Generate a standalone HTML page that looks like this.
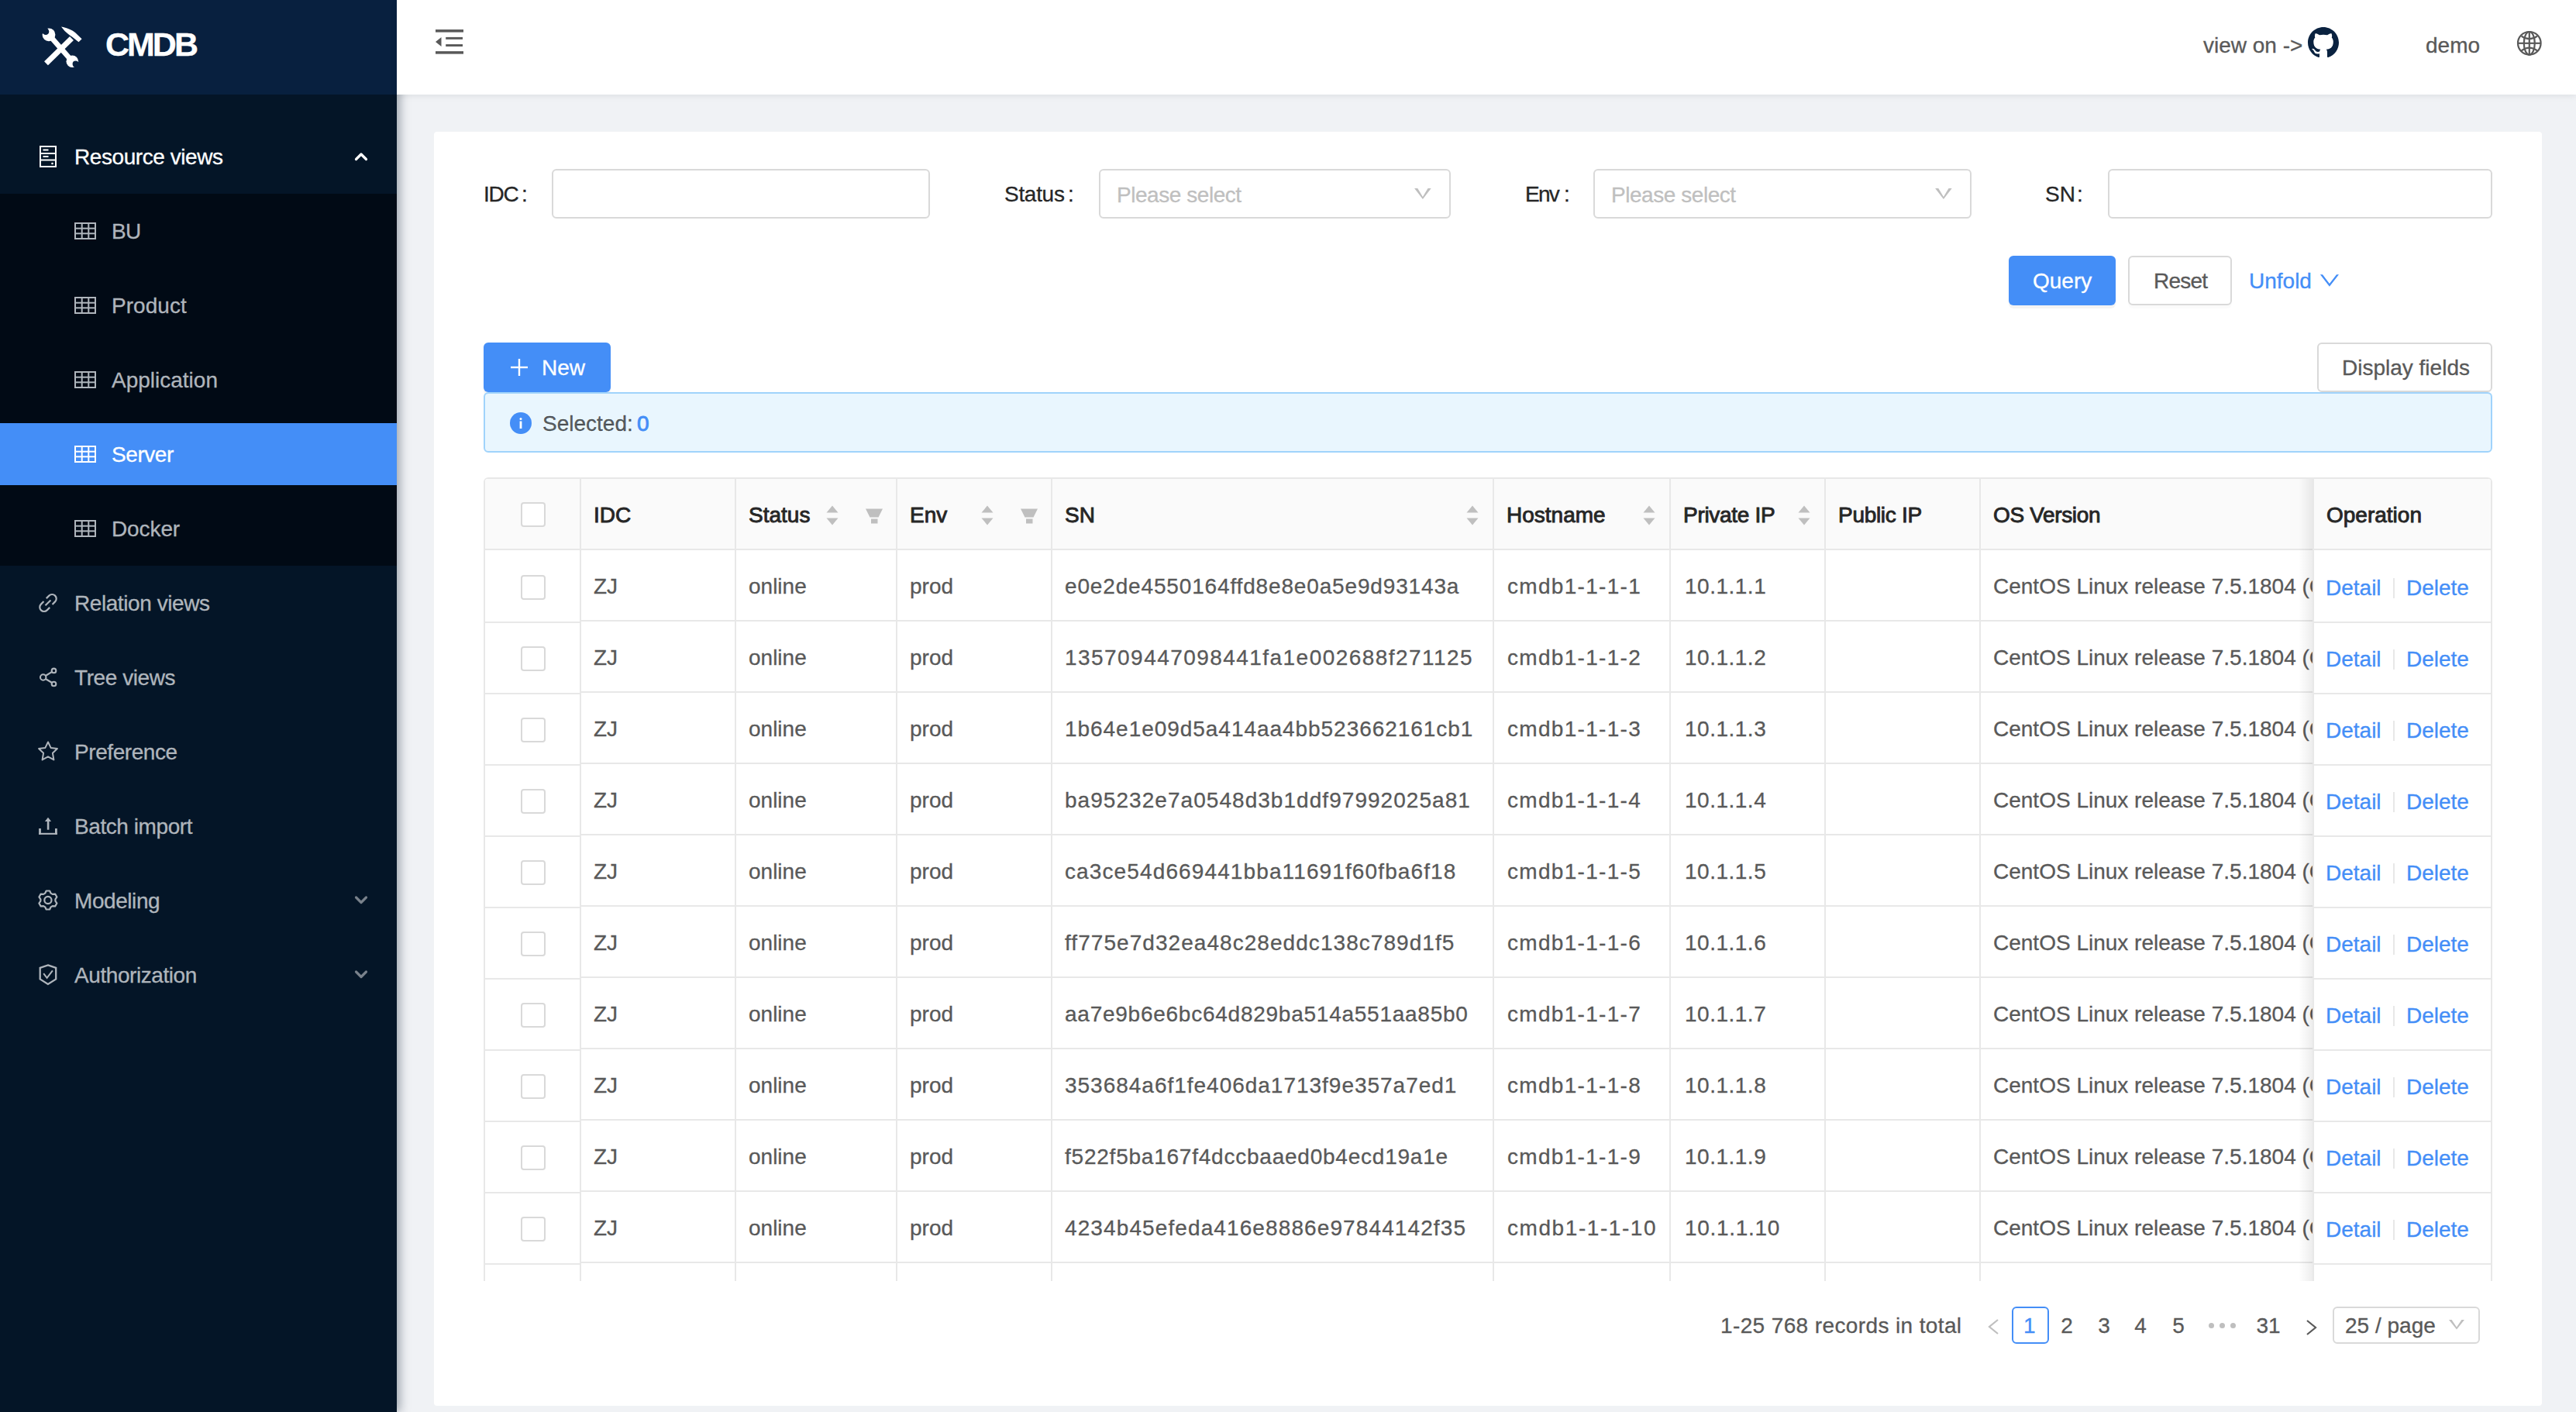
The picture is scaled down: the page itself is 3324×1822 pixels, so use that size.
<!DOCTYPE html>
<html><head><meta charset="utf-8"><title>CMDB - Server</title>
<style>
html,body{margin:0;padding:0;}
body{width:3324px;height:1822px;position:relative;overflow:hidden;background:#f0f2f5;font-family:"Liberation Sans",sans-serif;}
.a{position:absolute;box-sizing:border-box;}
.t{position:absolute;white-space:pre;line-height:1;-webkit-text-stroke-width:0.3px;}
svg.a{overflow:visible;}
</style></head><body>

<div class="a" style="left:512px;top:0px;width:2812px;height:122px;background:#fff;box-shadow:0 2px 8px rgba(0,21,41,0.08);z-index:5"></div>
<div style="position:absolute;left:0;top:0;z-index:6">
<svg class="a" style="left:562px;top:38px;" width="36" height="32" viewBox="0 0 36 32"><g fill="#595959"><rect x="0" y="0.1" width="36" height="3.5"/><rect x="13.2" y="9.9" width="21.8" height="2.9"/><rect x="13.2" y="19.1" width="21.8" height="2.9"/><rect x="0" y="28.1" width="36" height="3.5"/><path d="M0 16 L7.5 10 L7.5 22 Z"/></g></svg>
<div class="t" style="left:2843px;top:45.29px;font-size:28px;color:#595959;font-weight:400;">view on -&gt;</div>
<svg class="a" style="left:2978px;top:35px;" width="40" height="40" viewBox="0 0 16 16"><path fill="#0a2240" d="M8 0C3.58 0 0 3.58 0 8c0 3.54 2.29 6.53 5.47 7.59.4.07.55-.17.55-.38 0-.19-.01-.82-.01-1.49-2.01.37-2.53-.49-2.69-.94-.09-.23-.48-.94-.82-1.13-.28-.15-.68-.52-.01-.53.63-.01 1.08.58 1.23.82.72 1.21 1.87.87 2.33.66.07-.52.28-.87.51-1.07-1.78-.2-3.64-.89-3.64-3.95 0-.87.31-1.59.82-2.15-.08-.2-.36-1.02.08-2.12 0 0 .67-.21 2.2.82.64-.18 1.32-.27 2-.27.68 0 1.36.09 2 .27 1.53-1.04 2.2-.82 2.2-.82.44 1.1.16 1.92.08 2.12.51.56.82 1.27.82 2.15 0 3.07-1.87 3.75-3.65 3.95.29.25.54.73.54 1.48 0 1.07-.01 1.93-.01 2.2 0 .21.15.46.55.38A8.013 8.013 0 0016 8c0-4.42-3.58-8-8-8z"/></svg>
<div class="t" style="left:3130px;top:45.29px;font-size:28px;color:#595959;font-weight:400;">demo</div>
<svg class="a" style="left:3246px;top:38px;" width="36" height="36" viewBox="0 0 36 36"><g fill="none" stroke="#595959" stroke-width="2.2"><circle cx="17.8" cy="17.8" r="14.8"/><ellipse cx="17.8" cy="17.8" rx="7" ry="14.8"/><line x1="17.8" y1="3" x2="17.8" y2="32.6"/><line x1="3" y1="17.8" x2="32.6" y2="17.8"/><path d="M7.6 8.6 Q17.8 15.8 28 8.6 M7.6 27.3 Q17.8 19.9 28 27.3"/></g></svg>
</div>
<div class="a" style="left:0px;top:0px;width:512px;height:1822px;background:#041527;box-shadow:4px 0 12px rgba(0,21,41,0.35);z-index:3"></div>
<div style="position:absolute;left:0;top:0;z-index:4">
<div class="a" style="left:0px;top:0px;width:512px;height:122px;background:#08203f"></div>
<svg class="a" style="left:50px;top:32px;" width="56" height="56" viewBox="0 0 56 56"><defs><mask id="wm"><rect width="56" height="56" fill="#fff"/>
<circle cx="9" cy="8.7" r="4.3" fill="#000"/><g transform="translate(9,8.7) rotate(49)"><rect x="-12" y="-4.3" width="12" height="8.6" fill="#000"/></g>
<circle cx="47.6" cy="50.6" r="4" fill="#000"/><g transform="translate(47.6,50.6) rotate(49)"><rect x="0" y="-4" width="12" height="8" fill="#000"/></g>
</mask></defs>
<g fill="#fff" mask="url(#wm)"><line x1="13" y1="12.8" x2="43.3" y2="47.2" stroke="#fff" stroke-width="6.6"/><circle cx="13" cy="12.8" r="8.4"/><circle cx="43.3" cy="47.2" r="7.8"/></g>
<line x1="9.5" y1="49.7" x2="42.5" y2="17.5" stroke="#fff" stroke-width="7"/>
<path d="M29 2.6 C36 4 43 6.5 47 10 L55.6 18.2 L51.5 22.2 L43 15.5 C40 13.5 37 11 33.5 8 Z" fill="#fff"/></svg>
<div class="t" style="left:136px;top:35.89px;font-size:43px;color:#fff;font-weight:700;letter-spacing:-3px">CMDB</div>
<svg class="a" style="left:51px;top:188px;" width="22" height="28" viewBox="0 0 22 28"><g fill="none" stroke="#fff" stroke-width="2"><rect x="1" y="1" width="20" height="26"/><line x1="1" y1="10" x2="21" y2="10"/><line x1="1" y1="18.5" x2="21" y2="18.5"/></g><g fill="#fff"><rect x="4.5" y="4.5" width="7" height="2"/><rect x="4.5" y="13" width="7" height="2"/><circle cx="16.5" cy="23" r="1.3"/></g></svg>
<div class="t" style="left:96px;top:189.29px;font-size:28px;color:#fff;font-weight:400;letter-spacing:-0.43px">Resource views</div>
<svg class="a" style="left:456px;top:195.5px;" width="20" height="14" viewBox="0 0 20 14"><path d="M3.5 9.5 L10 3 L16.5 9.5" fill="none" stroke="#fff" stroke-width="3.2" stroke-linecap="round" stroke-linejoin="round"/></svg>
<div class="a" style="left:0px;top:250px;width:512px;height:480px;background:#010a15"></div>
<div class="a" style="left:0px;top:546px;width:512px;height:80px;background:#448ef7"></div>
<svg class="a" style="left:96px;top:287px;" width="28" height="22" viewBox="0 0 28 22"><g fill="none" stroke="#afb5bc" stroke-width="2"><rect x="1" y="1" width="26" height="20"/><line x1="1" y1="7.7" x2="27" y2="7.7"/><line x1="1" y1="14.3" x2="27" y2="14.3"/><line x1="9.7" y1="1" x2="9.7" y2="21"/><line x1="18.3" y1="1" x2="18.3" y2="21"/></g></svg>
<div class="t" style="left:144px;top:285.29px;font-size:28px;color:#afb5bc;font-weight:400;letter-spacing:-0.8px">BU</div>
<svg class="a" style="left:96px;top:383px;" width="28" height="22" viewBox="0 0 28 22"><g fill="none" stroke="#afb5bc" stroke-width="2"><rect x="1" y="1" width="26" height="20"/><line x1="1" y1="7.7" x2="27" y2="7.7"/><line x1="1" y1="14.3" x2="27" y2="14.3"/><line x1="9.7" y1="1" x2="9.7" y2="21"/><line x1="18.3" y1="1" x2="18.3" y2="21"/></g></svg>
<div class="t" style="left:144px;top:381.29px;font-size:28px;color:#afb5bc;font-weight:400;letter-spacing:0.05px">Product</div>
<svg class="a" style="left:96px;top:479px;" width="28" height="22" viewBox="0 0 28 22"><g fill="none" stroke="#afb5bc" stroke-width="2"><rect x="1" y="1" width="26" height="20"/><line x1="1" y1="7.7" x2="27" y2="7.7"/><line x1="1" y1="14.3" x2="27" y2="14.3"/><line x1="9.7" y1="1" x2="9.7" y2="21"/><line x1="18.3" y1="1" x2="18.3" y2="21"/></g></svg>
<div class="t" style="left:144px;top:477.29px;font-size:28px;color:#afb5bc;font-weight:400;letter-spacing:0px">Application</div>
<svg class="a" style="left:96px;top:575px;" width="28" height="22" viewBox="0 0 28 22"><g fill="none" stroke="#fff" stroke-width="2"><rect x="1" y="1" width="26" height="20"/><line x1="1" y1="7.7" x2="27" y2="7.7"/><line x1="1" y1="14.3" x2="27" y2="14.3"/><line x1="9.7" y1="1" x2="9.7" y2="21"/><line x1="18.3" y1="1" x2="18.3" y2="21"/></g></svg>
<div class="t" style="left:144px;top:573.29px;font-size:28px;color:#fff;font-weight:400;letter-spacing:-0.43px">Server</div>
<svg class="a" style="left:96px;top:671px;" width="28" height="22" viewBox="0 0 28 22"><g fill="none" stroke="#afb5bc" stroke-width="2"><rect x="1" y="1" width="26" height="20"/><line x1="1" y1="7.7" x2="27" y2="7.7"/><line x1="1" y1="14.3" x2="27" y2="14.3"/><line x1="9.7" y1="1" x2="9.7" y2="21"/><line x1="18.3" y1="1" x2="18.3" y2="21"/></g></svg>
<div class="t" style="left:144px;top:669.29px;font-size:28px;color:#afb5bc;font-weight:400;letter-spacing:-0.1px">Docker</div>
<div class="t" style="left:96px;top:765.29px;font-size:28px;color:#afb5bc;font-weight:400;letter-spacing:-0.43px">Relation views</div>
<div class="t" style="left:96px;top:861.29px;font-size:28px;color:#afb5bc;font-weight:400;letter-spacing:-0.43px">Tree views</div>
<div class="t" style="left:96px;top:957.29px;font-size:28px;color:#afb5bc;font-weight:400;letter-spacing:-0.43px">Preference</div>
<div class="t" style="left:96px;top:1053.29px;font-size:28px;color:#afb5bc;font-weight:400;letter-spacing:-0.43px">Batch import</div>
<div class="t" style="left:96px;top:1149.29px;font-size:28px;color:#afb5bc;font-weight:400;letter-spacing:-0.43px">Modeling</div>
<div class="t" style="left:96px;top:1245.29px;font-size:28px;color:#afb5bc;font-weight:400;letter-spacing:-0.43px">Authorization</div>
<svg class="a" style="left:44px;top:760px;" width="36" height="36" viewBox="0 0 36 36"><g fill="none" stroke="#afb5bc" stroke-width="2.2"><path d="M23.55 19.92 L27.09 16.39 A5.5 5.5 0 0 0 19.31 8.61 L15.77 12.15"/><path d="M12.45 16.08 L8.91 19.61 A5.5 5.5 0 0 0 16.69 27.39 L20.23 23.85"/><line x1="14.5" y1="21.2" x2="21.4" y2="14.5"/></g></svg>
<svg class="a" style="left:44px;top:856px;" width="36" height="36" viewBox="0 0 36 36"><g fill="none" stroke="#afb5bc" stroke-width="2.1"><circle cx="11.7" cy="18" r="3.7"/><circle cx="25.5" cy="9.4" r="2.8"/><circle cx="25.5" cy="26.5" r="2.8"/><line x1="14.8" y1="16" x2="23.1" y2="10.9"/><line x1="14.8" y1="20" x2="23.1" y2="25"/></g></svg>
<svg class="a" style="left:49px;top:956px;" width="26" height="26" viewBox="0 0 26 26"><path fill="none" stroke="#afb5bc" stroke-width="2" stroke-linejoin="round" d="M13 1.5 L16.6 8.9 L24.9 10 L18.9 15.7 L20.4 24.4 L13 20.3 L5.6 24.4 L7.1 15.7 L1.1 10 L9.4 8.9 Z"/></svg>
<svg class="a" style="left:50px;top:1053px;" width="24" height="24" viewBox="0 0 24 24"><g fill="#afb5bc"><rect x="0.1" y="16" width="2.8" height="7.9"/><rect x="21" y="16" width="2.8" height="7.9"/><rect x="0.1" y="21.8" width="23.7" height="2.1"/><path d="M7.9 7 L12 1.7 L16.1 7 Z"/><rect x="10.8" y="6.5" width="2.6" height="11.2"/></g></svg>
<svg class="a" style="left:44px;top:1142px;" width="36" height="36" viewBox="0 0 36 36"><g fill="none" stroke="#afb5bc" stroke-width="2.2" stroke-linejoin="round"><path d="M14.15 10.66 L15.68 7.50 L20.12 7.50 L21.65 10.66 L23.68 11.83 L27.18 11.58 L29.40 15.43 L27.43 18.33 L27.43 20.67 L29.40 23.57 L27.18 27.42 L23.68 27.17 L21.65 28.34 L20.12 31.50 L15.68 31.50 L14.15 28.34 L12.12 27.17 L8.62 27.42 L6.40 23.57 L8.37 20.67 L8.37 18.33 L6.40 15.43 L8.62 11.58 L12.12 11.83 Z"/><circle cx="17.9" cy="19.5" r="4.6"/></g></svg>
<svg class="a" style="left:44px;top:1238px;" width="36" height="36" viewBox="0 0 36 36"><g fill="none" stroke="#afb5bc" stroke-width="2.3"><path d="M17.9 7.4 L28.2 10.8 V25.4 L17.9 32 L7.7 25.4 V10.8 Z"/><path d="M12.2 18.2 L16.6 23.9 L23.9 14.3" stroke-width="2"/></g></svg>
<svg class="a" style="left:456px;top:1155.3px;" width="20" height="14" viewBox="0 0 20 14"><path d="M3.5 3 L10 9.5 L16.5 3" fill="none" stroke="#79818b" stroke-width="3.2" stroke-linecap="round" stroke-linejoin="round"/></svg>
<svg class="a" style="left:456px;top:1251.3px;" width="20" height="14" viewBox="0 0 20 14"><path d="M3.5 3 L10 9.5 L16.5 3" fill="none" stroke="#79818b" stroke-width="3.2" stroke-linecap="round" stroke-linejoin="round"/></svg>
</div>
<div class="a" style="left:560px;top:170px;width:2720px;height:1644px;background:#fff;border-radius:4px"></div>
<div class="t" style="left:624px;top:237.29px;font-size:28px;color:#262626;font-weight:400;letter-spacing:-1.3px">IDC</div>
<div class="t" style="left:673px;top:237.29px;font-size:28px;color:#262626;font-weight:400;">:</div>
<div class="a" style="left:712px;top:218px;width:488px;height:64px;border:2px solid #d9d9d9;border-radius:6px;background:#fff"></div>
<div class="t" style="left:1296px;top:237.29px;font-size:28px;color:#262626;font-weight:400;letter-spacing:-0.3px">Status</div>
<div class="t" style="left:1378px;top:237.29px;font-size:28px;color:#262626;font-weight:400;">:</div>
<div class="a" style="left:1418px;top:218px;width:454px;height:64px;border:2px solid #d9d9d9;border-radius:6px;background:#fff"></div>
<div class="t" style="left:1441px;top:238.29px;font-size:28px;color:#bfbfbf;font-weight:400;letter-spacing:-0.45px">Please select</div>
<svg class="a" style="left:1825px;top:243px;" width="22" height="14" viewBox="0 0 22 14"><path d="M0.1 0 L4.3 0 L10.9 11.1 L17.5 0 L21.7 0 L10.9 14 Z" fill="#bfbfbf"/></svg>
<div class="t" style="left:1968px;top:237.29px;font-size:28px;color:#262626;font-weight:400;letter-spacing:-1.8px">Env</div>
<div class="t" style="left:2018px;top:237.29px;font-size:28px;color:#262626;font-weight:400;">:</div>
<div class="a" style="left:2056px;top:218px;width:488px;height:64px;border:2px solid #d9d9d9;border-radius:6px;background:#fff"></div>
<div class="t" style="left:2079px;top:238.29px;font-size:28px;color:#bfbfbf;font-weight:400;letter-spacing:-0.45px">Please select</div>
<svg class="a" style="left:2497px;top:243px;" width="22" height="14" viewBox="0 0 22 14"><path d="M0.1 0 L4.3 0 L10.9 11.1 L17.5 0 L21.7 0 L10.9 14 Z" fill="#bfbfbf"/></svg>
<div class="t" style="left:2639px;top:237.29px;font-size:28px;color:#262626;font-weight:400;">SN</div>
<div class="t" style="left:2680px;top:237.29px;font-size:28px;color:#262626;font-weight:400;">:</div>
<div class="a" style="left:2720px;top:218px;width:496px;height:64px;border:2px solid #d9d9d9;border-radius:6px;background:#fff"></div>
<div class="a" style="left:2592px;top:330px;width:138px;height:64px;background:#448ef7;border-radius:6px;box-shadow:0 4px 0 rgba(0,0,0,0.045)"></div>
<div class="t" style="left:2623px;top:349.29px;font-size:28px;color:#fff;font-weight:400;">Query</div>
<div class="a" style="left:2746px;top:330px;width:134px;height:64px;border:2px solid #d9d9d9;border-radius:6px;background:#fff;box-shadow:0 4px 0 rgba(0,0,0,0.015)"></div>
<div class="t" style="left:2779px;top:349.29px;font-size:28px;color:#595959;font-weight:400;letter-spacing:-0.8px">Reset</div>
<div class="t" style="left:2902px;top:349.29px;font-size:28px;color:#448ef7;font-weight:400;">Unfold</div>
<svg class="a" style="left:2994px;top:354px;" width="24" height="16" viewBox="0 0 24 16"><path d="M-0.1 0.2 L3 0.2 L11.9 12.1 L21 0.2 L24 0.2 L11.9 15.7 Z" fill="#448ef7"/></svg>
<div class="a" style="left:624px;top:442px;width:164px;height:64px;background:#448ef7;border-radius:6px;box-shadow:0 4px 0 rgba(0,0,0,0.045)"></div>
<svg class="a" style="left:659px;top:463px;" width="22" height="22" viewBox="0 0 22 22"><g stroke="#fff" stroke-width="2.4"><line x1="0" y1="11" x2="22" y2="11"/><line x1="11" y1="0" x2="11" y2="22"/></g></svg>
<div class="t" style="left:699px;top:461.29px;font-size:28px;color:#fff;font-weight:400;">New</div>
<div class="a" style="left:2990px;top:442px;width:226px;height:64px;border:2px solid #d9d9d9;border-radius:6px;background:#fff"></div>
<div class="t" style="left:3022px;top:461.29px;font-size:28px;color:#595959;font-weight:400;">Display fields</div>
<div class="a" style="left:624px;top:506px;width:2592px;height:78px;background:#e9f6fe;border:2px solid #a0d3fb;border-radius:6px"></div>
<svg class="a" style="left:658px;top:532px;" width="28" height="28" viewBox="0 0 28 28"><circle cx="14" cy="14" r="14" fill="#448ef7"/><rect x="12.6" y="11.5" width="2.8" height="9.5" fill="#fff"/><circle cx="14" cy="8.5" r="1.5" fill="#fff"/></svg>
<div class="t" style="left:700px;top:533.29px;font-size:28px;color:rgba(0,0,0,0.65);font-weight:400;">Selected: </div>
<div class="t" style="left:822px;top:533.29px;font-size:28px;color:#448ef7;font-weight:400;-webkit-text-stroke-width:0.9px">0</div>
<div class="a" style="left:624px;top:616px;width:2592px;height:1037px;overflow:hidden;border:2px solid #e8e8e8;border-bottom:none;border-radius:6px 6px 0 0;background:#fff">
<div class="a" style="left:0px;top:0px;width:2588px;height:90px;background:#fafafa"></div>
<div class="a" style="left:0px;top:90px;width:2588px;height:2px;background:#e8e8e8"></div>
<div class="a" style="left:122px;top:0px;width:2px;height:1040px;background:#e8e8e8"></div>
<div class="a" style="left:322px;top:0px;width:2px;height:1040px;background:#e8e8e8"></div>
<div class="a" style="left:530px;top:0px;width:2px;height:1040px;background:#e8e8e8"></div>
<div class="a" style="left:730px;top:0px;width:2px;height:1040px;background:#e8e8e8"></div>
<div class="a" style="left:1300px;top:0px;width:2px;height:1040px;background:#e8e8e8"></div>
<div class="a" style="left:1528px;top:0px;width:2px;height:1040px;background:#e8e8e8"></div>
<div class="a" style="left:1728px;top:0px;width:2px;height:1040px;background:#e8e8e8"></div>
<div class="a" style="left:1928px;top:0px;width:2px;height:1040px;background:#e8e8e8"></div>
<div class="a" style="left:124px;top:182px;width:2240px;height:2px;background:#e8e8e8"></div>
<div class="a" style="left:124px;top:274px;width:2240px;height:2px;background:#e8e8e8"></div>
<div class="a" style="left:124px;top:366px;width:2240px;height:2px;background:#e8e8e8"></div>
<div class="a" style="left:124px;top:458px;width:2240px;height:2px;background:#e8e8e8"></div>
<div class="a" style="left:124px;top:550px;width:2240px;height:2px;background:#e8e8e8"></div>
<div class="a" style="left:124px;top:642px;width:2240px;height:2px;background:#e8e8e8"></div>
<div class="a" style="left:124px;top:734px;width:2240px;height:2px;background:#e8e8e8"></div>
<div class="a" style="left:124px;top:826px;width:2240px;height:2px;background:#e8e8e8"></div>
<div class="a" style="left:124px;top:918px;width:2240px;height:2px;background:#e8e8e8"></div>
<div class="a" style="left:124px;top:1010px;width:2240px;height:2px;background:#e8e8e8"></div>
<div class="t" style="left:140px;top:33.29px;font-size:28px;color:#262626;font-weight:400;-webkit-text-stroke:0.9px #262626;letter-spacing:0px">IDC</div>
<div class="t" style="left:340px;top:33.29px;font-size:28px;color:#262626;font-weight:400;-webkit-text-stroke:0.9px #262626;letter-spacing:0px">Status</div>
<div class="t" style="left:548px;top:33.29px;font-size:28px;color:#262626;font-weight:400;-webkit-text-stroke:0.9px #262626;letter-spacing:0px">Env</div>
<div class="t" style="left:748px;top:33.29px;font-size:28px;color:#262626;font-weight:400;-webkit-text-stroke:0.9px #262626;letter-spacing:0px">SN</div>
<div class="t" style="left:1318px;top:33.29px;font-size:28px;color:#262626;font-weight:400;-webkit-text-stroke:0.9px #262626;letter-spacing:0px">Hostname</div>
<div class="t" style="left:1546px;top:33.29px;font-size:28px;color:#262626;font-weight:400;-webkit-text-stroke:0.9px #262626;letter-spacing:-0.3px">Private IP</div>
<div class="t" style="left:1746px;top:33.29px;font-size:28px;color:#262626;font-weight:400;-webkit-text-stroke:0.9px #262626;letter-spacing:-0.3px">Public IP</div>
<div class="t" style="left:1946px;top:33.29px;font-size:28px;color:#262626;font-weight:400;-webkit-text-stroke:0.9px #262626;letter-spacing:-0.35px">OS Version</div>
<svg class="a" style="left:440px;top:34px;" width="16" height="26" viewBox="0 0 16 26"><g fill="#bfbfbf"><path d="M8 0.5 L15.5 9.5 H0.5 Z"/><path d="M0.5 16.5 H15.5 L8 25.5 Z"/></g></svg>
<svg class="a" style="left:491px;top:38px;" width="22" height="20" viewBox="0 0 22 20"><g fill="#bfbfbf"><path d="M0 0.5 H22 L16.5 11.5 H5.5 Z"/><rect x="7" y="13.5" width="8.5" height="6"/></g></svg>
<svg class="a" style="left:640px;top:34px;" width="16" height="26" viewBox="0 0 16 26"><g fill="#bfbfbf"><path d="M8 0.5 L15.5 9.5 H0.5 Z"/><path d="M0.5 16.5 H15.5 L8 25.5 Z"/></g></svg>
<svg class="a" style="left:691px;top:38px;" width="22" height="20" viewBox="0 0 22 20"><g fill="#bfbfbf"><path d="M0 0.5 H22 L16.5 11.5 H5.5 Z"/><rect x="7" y="13.5" width="8.5" height="6"/></g></svg>
<svg class="a" style="left:1266px;top:34px;" width="16" height="26" viewBox="0 0 16 26"><g fill="#bfbfbf"><path d="M8 0.5 L15.5 9.5 H0.5 Z"/><path d="M0.5 16.5 H15.5 L8 25.5 Z"/></g></svg>
<svg class="a" style="left:1494px;top:34px;" width="16" height="26" viewBox="0 0 16 26"><g fill="#bfbfbf"><path d="M8 0.5 L15.5 9.5 H0.5 Z"/><path d="M0.5 16.5 H15.5 L8 25.5 Z"/></g></svg>
<svg class="a" style="left:1694px;top:34px;" width="16" height="26" viewBox="0 0 16 26"><g fill="#bfbfbf"><path d="M8 0.5 L15.5 9.5 H0.5 Z"/><path d="M0.5 16.5 H15.5 L8 25.5 Z"/></g></svg>
<div class="t" style="left:140px;top:125.29px;font-size:28px;color:#595959;font-weight:400;">ZJ</div>
<div class="t" style="left:340px;top:125.29px;font-size:28px;color:#595959;font-weight:400;">online</div>
<div class="t" style="left:548px;top:125.29px;font-size:28px;color:#595959;font-weight:400;">prod</div>
<div class="t" style="left:748px;top:125.29px;font-size:28px;color:#595959;font-weight:400;letter-spacing:0.844px">e0e2de4550164ffd8e8e0a5e9d93143a</div>
<div class="t" style="left:1319px;top:125.29px;font-size:28px;color:#595959;font-weight:400;letter-spacing:1.3px">cmdb1-1-1-1</div>
<div class="t" style="left:1548px;top:125.29px;font-size:28px;color:#595959;font-weight:400;letter-spacing:0.5px">10.1.1.1</div>
<div class="t" style="left:1946px;top:125.29px;font-size:28px;color:#595959;font-weight:400;">CentOS Linux release 7.5.1804 (Core)</div>
<div class="t" style="left:140px;top:217.29px;font-size:28px;color:#595959;font-weight:400;">ZJ</div>
<div class="t" style="left:340px;top:217.29px;font-size:28px;color:#595959;font-weight:400;">online</div>
<div class="t" style="left:548px;top:217.29px;font-size:28px;color:#595959;font-weight:400;">prod</div>
<div class="t" style="left:748px;top:217.29px;font-size:28px;color:#595959;font-weight:400;letter-spacing:1.45px">135709447098441fa1e002688f271125</div>
<div class="t" style="left:1319px;top:217.29px;font-size:28px;color:#595959;font-weight:400;letter-spacing:1.3px">cmdb1-1-1-2</div>
<div class="t" style="left:1548px;top:217.29px;font-size:28px;color:#595959;font-weight:400;letter-spacing:0.5px">10.1.1.2</div>
<div class="t" style="left:1946px;top:217.29px;font-size:28px;color:#595959;font-weight:400;">CentOS Linux release 7.5.1804 (Core)</div>
<div class="t" style="left:140px;top:309.29px;font-size:28px;color:#595959;font-weight:400;">ZJ</div>
<div class="t" style="left:340px;top:309.29px;font-size:28px;color:#595959;font-weight:400;">online</div>
<div class="t" style="left:548px;top:309.29px;font-size:28px;color:#595959;font-weight:400;">prod</div>
<div class="t" style="left:748px;top:309.29px;font-size:28px;color:#595959;font-weight:400;letter-spacing:0.957px">1b64e1e09d5a414aa4bb523662161cb1</div>
<div class="t" style="left:1319px;top:309.29px;font-size:28px;color:#595959;font-weight:400;letter-spacing:1.3px">cmdb1-1-1-3</div>
<div class="t" style="left:1548px;top:309.29px;font-size:28px;color:#595959;font-weight:400;letter-spacing:0.5px">10.1.1.3</div>
<div class="t" style="left:1946px;top:309.29px;font-size:28px;color:#595959;font-weight:400;">CentOS Linux release 7.5.1804 (Core)</div>
<div class="t" style="left:140px;top:401.29px;font-size:28px;color:#595959;font-weight:400;">ZJ</div>
<div class="t" style="left:340px;top:401.29px;font-size:28px;color:#595959;font-weight:400;">online</div>
<div class="t" style="left:548px;top:401.29px;font-size:28px;color:#595959;font-weight:400;">prod</div>
<div class="t" style="left:748px;top:401.29px;font-size:28px;color:#595959;font-weight:400;letter-spacing:1.044px">ba95232e7a0548d3b1ddf97992025a81</div>
<div class="t" style="left:1319px;top:401.29px;font-size:28px;color:#595959;font-weight:400;letter-spacing:1.3px">cmdb1-1-1-4</div>
<div class="t" style="left:1548px;top:401.29px;font-size:28px;color:#595959;font-weight:400;letter-spacing:0.5px">10.1.1.4</div>
<div class="t" style="left:1946px;top:401.29px;font-size:28px;color:#595959;font-weight:400;">CentOS Linux release 7.5.1804 (Core)</div>
<div class="t" style="left:140px;top:493.29px;font-size:28px;color:#595959;font-weight:400;">ZJ</div>
<div class="t" style="left:340px;top:493.29px;font-size:28px;color:#595959;font-weight:400;">online</div>
<div class="t" style="left:548px;top:493.29px;font-size:28px;color:#595959;font-weight:400;">prod</div>
<div class="t" style="left:748px;top:493.29px;font-size:28px;color:#595959;font-weight:400;letter-spacing:1.118px">ca3ce54d669441bba11691f60fba6f18</div>
<div class="t" style="left:1319px;top:493.29px;font-size:28px;color:#595959;font-weight:400;letter-spacing:1.3px">cmdb1-1-1-5</div>
<div class="t" style="left:1548px;top:493.29px;font-size:28px;color:#595959;font-weight:400;letter-spacing:0.5px">10.1.1.5</div>
<div class="t" style="left:1946px;top:493.29px;font-size:28px;color:#595959;font-weight:400;">CentOS Linux release 7.5.1804 (Core)</div>
<div class="t" style="left:140px;top:585.29px;font-size:28px;color:#595959;font-weight:400;">ZJ</div>
<div class="t" style="left:340px;top:585.29px;font-size:28px;color:#595959;font-weight:400;">online</div>
<div class="t" style="left:548px;top:585.29px;font-size:28px;color:#595959;font-weight:400;">prod</div>
<div class="t" style="left:748px;top:585.29px;font-size:28px;color:#595959;font-weight:400;letter-spacing:1.054px">ff775e7d32ea48c28eddc138c789d1f5</div>
<div class="t" style="left:1319px;top:585.29px;font-size:28px;color:#595959;font-weight:400;letter-spacing:1.3px">cmdb1-1-1-6</div>
<div class="t" style="left:1548px;top:585.29px;font-size:28px;color:#595959;font-weight:400;letter-spacing:0.5px">10.1.1.6</div>
<div class="t" style="left:1946px;top:585.29px;font-size:28px;color:#595959;font-weight:400;">CentOS Linux release 7.5.1804 (Core)</div>
<div class="t" style="left:140px;top:677.29px;font-size:28px;color:#595959;font-weight:400;">ZJ</div>
<div class="t" style="left:340px;top:677.29px;font-size:28px;color:#595959;font-weight:400;">online</div>
<div class="t" style="left:548px;top:677.29px;font-size:28px;color:#595959;font-weight:400;">prod</div>
<div class="t" style="left:748px;top:677.29px;font-size:28px;color:#595959;font-weight:400;letter-spacing:0.747px">aa7e9b6e6bc64d829ba514a551aa85b0</div>
<div class="t" style="left:1319px;top:677.29px;font-size:28px;color:#595959;font-weight:400;letter-spacing:1.3px">cmdb1-1-1-7</div>
<div class="t" style="left:1548px;top:677.29px;font-size:28px;color:#595959;font-weight:400;letter-spacing:0.5px">10.1.1.7</div>
<div class="t" style="left:1946px;top:677.29px;font-size:28px;color:#595959;font-weight:400;">CentOS Linux release 7.5.1804 (Core)</div>
<div class="t" style="left:140px;top:769.29px;font-size:28px;color:#595959;font-weight:400;">ZJ</div>
<div class="t" style="left:340px;top:769.29px;font-size:28px;color:#595959;font-weight:400;">online</div>
<div class="t" style="left:548px;top:769.29px;font-size:28px;color:#595959;font-weight:400;">prod</div>
<div class="t" style="left:748px;top:769.29px;font-size:28px;color:#595959;font-weight:400;letter-spacing:0.983px">353684a6f1fe406da1713f9e357a7ed1</div>
<div class="t" style="left:1319px;top:769.29px;font-size:28px;color:#595959;font-weight:400;letter-spacing:1.3px">cmdb1-1-1-8</div>
<div class="t" style="left:1548px;top:769.29px;font-size:28px;color:#595959;font-weight:400;letter-spacing:0.5px">10.1.1.8</div>
<div class="t" style="left:1946px;top:769.29px;font-size:28px;color:#595959;font-weight:400;">CentOS Linux release 7.5.1804 (Core)</div>
<div class="t" style="left:140px;top:861.29px;font-size:28px;color:#595959;font-weight:400;">ZJ</div>
<div class="t" style="left:340px;top:861.29px;font-size:28px;color:#595959;font-weight:400;">online</div>
<div class="t" style="left:548px;top:861.29px;font-size:28px;color:#595959;font-weight:400;">prod</div>
<div class="t" style="left:748px;top:861.29px;font-size:28px;color:#595959;font-weight:400;letter-spacing:0.77px">f522f5ba167f4dccbaaed0b4ecd19a1e</div>
<div class="t" style="left:1319px;top:861.29px;font-size:28px;color:#595959;font-weight:400;letter-spacing:1.3px">cmdb1-1-1-9</div>
<div class="t" style="left:1548px;top:861.29px;font-size:28px;color:#595959;font-weight:400;letter-spacing:0.5px">10.1.1.9</div>
<div class="t" style="left:1946px;top:861.29px;font-size:28px;color:#595959;font-weight:400;">CentOS Linux release 7.5.1804 (Core)</div>
<div class="t" style="left:140px;top:953.29px;font-size:28px;color:#595959;font-weight:400;">ZJ</div>
<div class="t" style="left:340px;top:953.29px;font-size:28px;color:#595959;font-weight:400;">online</div>
<div class="t" style="left:548px;top:953.29px;font-size:28px;color:#595959;font-weight:400;">prod</div>
<div class="t" style="left:748px;top:953.29px;font-size:28px;color:#595959;font-weight:400;letter-spacing:1.105px">4234b45efeda416e8886e97844142f35</div>
<div class="t" style="left:1319px;top:953.29px;font-size:28px;color:#595959;font-weight:400;letter-spacing:1.57px">cmdb1-1-1-10</div>
<div class="t" style="left:1548px;top:953.29px;font-size:28px;color:#595959;font-weight:400;letter-spacing:0.7px">10.1.1.10</div>
<div class="t" style="left:1946px;top:953.29px;font-size:28px;color:#595959;font-weight:400;">CentOS Linux release 7.5.1804 (Core)</div>
<div class="a" style="left:0px;top:0px;width:122px;height:1040px;background:#fff"></div>
<div class="a" style="left:0px;top:0px;width:122px;height:90px;background:#fafafa"></div>
<div class="a" style="left:0px;top:90px;width:122px;height:2px;background:#e8e8e8"></div>
<div class="a" style="left:0px;top:184px;width:122px;height:2px;background:#e8e8e8"></div>
<div class="a" style="left:0px;top:276px;width:122px;height:2px;background:#e8e8e8"></div>
<div class="a" style="left:0px;top:368px;width:122px;height:2px;background:#e8e8e8"></div>
<div class="a" style="left:0px;top:460px;width:122px;height:2px;background:#e8e8e8"></div>
<div class="a" style="left:0px;top:552px;width:122px;height:2px;background:#e8e8e8"></div>
<div class="a" style="left:0px;top:644px;width:122px;height:2px;background:#e8e8e8"></div>
<div class="a" style="left:0px;top:736px;width:122px;height:2px;background:#e8e8e8"></div>
<div class="a" style="left:0px;top:828px;width:122px;height:2px;background:#e8e8e8"></div>
<div class="a" style="left:0px;top:920px;width:122px;height:2px;background:#e8e8e8"></div>
<div class="a" style="left:0px;top:1012px;width:122px;height:2px;background:#e8e8e8"></div>
<div class="a" style="left:46px;top:30px;width:32px;height:32px;border:2px solid #d9d9d9;border-radius:4px;background:#fff"></div>
<div class="a" style="left:46px;top:124px;width:32px;height:32px;border:2px solid #d9d9d9;border-radius:4px;background:#fff"></div>
<div class="a" style="left:46px;top:216px;width:32px;height:32px;border:2px solid #d9d9d9;border-radius:4px;background:#fff"></div>
<div class="a" style="left:46px;top:308px;width:32px;height:32px;border:2px solid #d9d9d9;border-radius:4px;background:#fff"></div>
<div class="a" style="left:46px;top:400px;width:32px;height:32px;border:2px solid #d9d9d9;border-radius:4px;background:#fff"></div>
<div class="a" style="left:46px;top:492px;width:32px;height:32px;border:2px solid #d9d9d9;border-radius:4px;background:#fff"></div>
<div class="a" style="left:46px;top:584px;width:32px;height:32px;border:2px solid #d9d9d9;border-radius:4px;background:#fff"></div>
<div class="a" style="left:46px;top:676px;width:32px;height:32px;border:2px solid #d9d9d9;border-radius:4px;background:#fff"></div>
<div class="a" style="left:46px;top:768px;width:32px;height:32px;border:2px solid #d9d9d9;border-radius:4px;background:#fff"></div>
<div class="a" style="left:46px;top:860px;width:32px;height:32px;border:2px solid #d9d9d9;border-radius:4px;background:#fff"></div>
<div class="a" style="left:46px;top:952px;width:32px;height:32px;border:2px solid #d9d9d9;border-radius:4px;background:#fff"></div>
<div class="a" style="left:2340px;top:0px;width:18px;height:1040px;background:linear-gradient(to right, rgba(0,0,0,0), rgba(0,0,0,0.07))"></div>
<div class="a" style="left:2358px;top:0px;width:230px;height:1040px;background:#fff"></div>
<div class="a" style="left:2358px;top:0px;width:2px;height:1040px;background:#e8e8e8"></div>
<div class="a" style="left:2360px;top:0px;width:228px;height:90px;background:#fafafa"></div>
<div class="a" style="left:2360px;top:90px;width:228px;height:2px;background:#e8e8e8"></div>
<div class="a" style="left:2360px;top:184px;width:228px;height:2px;background:#e8e8e8"></div>
<div class="a" style="left:2360px;top:276px;width:228px;height:2px;background:#e8e8e8"></div>
<div class="a" style="left:2360px;top:368px;width:228px;height:2px;background:#e8e8e8"></div>
<div class="a" style="left:2360px;top:460px;width:228px;height:2px;background:#e8e8e8"></div>
<div class="a" style="left:2360px;top:552px;width:228px;height:2px;background:#e8e8e8"></div>
<div class="a" style="left:2360px;top:644px;width:228px;height:2px;background:#e8e8e8"></div>
<div class="a" style="left:2360px;top:736px;width:228px;height:2px;background:#e8e8e8"></div>
<div class="a" style="left:2360px;top:828px;width:228px;height:2px;background:#e8e8e8"></div>
<div class="a" style="left:2360px;top:920px;width:228px;height:2px;background:#e8e8e8"></div>
<div class="a" style="left:2360px;top:1012px;width:228px;height:2px;background:#e8e8e8"></div>
<div class="t" style="left:2376px;top:33.29px;font-size:28px;color:#262626;font-weight:400;-webkit-text-stroke:0.9px #262626">Operation</div>
<div class="t" style="left:2375px;top:127.29px;font-size:28px;color:#448ef7;font-weight:400;">Detail</div>
<div class="a" style="left:2462px;top:128px;width:2px;height:26px;background:#e8e8e8"></div>
<div class="t" style="left:2479px;top:127.29px;font-size:28px;color:#448ef7;font-weight:400;">Delete</div>
<div class="t" style="left:2375px;top:219.29px;font-size:28px;color:#448ef7;font-weight:400;">Detail</div>
<div class="a" style="left:2462px;top:220px;width:2px;height:26px;background:#e8e8e8"></div>
<div class="t" style="left:2479px;top:219.29px;font-size:28px;color:#448ef7;font-weight:400;">Delete</div>
<div class="t" style="left:2375px;top:311.29px;font-size:28px;color:#448ef7;font-weight:400;">Detail</div>
<div class="a" style="left:2462px;top:312px;width:2px;height:26px;background:#e8e8e8"></div>
<div class="t" style="left:2479px;top:311.29px;font-size:28px;color:#448ef7;font-weight:400;">Delete</div>
<div class="t" style="left:2375px;top:403.29px;font-size:28px;color:#448ef7;font-weight:400;">Detail</div>
<div class="a" style="left:2462px;top:404px;width:2px;height:26px;background:#e8e8e8"></div>
<div class="t" style="left:2479px;top:403.29px;font-size:28px;color:#448ef7;font-weight:400;">Delete</div>
<div class="t" style="left:2375px;top:495.29px;font-size:28px;color:#448ef7;font-weight:400;">Detail</div>
<div class="a" style="left:2462px;top:496px;width:2px;height:26px;background:#e8e8e8"></div>
<div class="t" style="left:2479px;top:495.29px;font-size:28px;color:#448ef7;font-weight:400;">Delete</div>
<div class="t" style="left:2375px;top:587.29px;font-size:28px;color:#448ef7;font-weight:400;">Detail</div>
<div class="a" style="left:2462px;top:588px;width:2px;height:26px;background:#e8e8e8"></div>
<div class="t" style="left:2479px;top:587.29px;font-size:28px;color:#448ef7;font-weight:400;">Delete</div>
<div class="t" style="left:2375px;top:679.29px;font-size:28px;color:#448ef7;font-weight:400;">Detail</div>
<div class="a" style="left:2462px;top:680px;width:2px;height:26px;background:#e8e8e8"></div>
<div class="t" style="left:2479px;top:679.29px;font-size:28px;color:#448ef7;font-weight:400;">Delete</div>
<div class="t" style="left:2375px;top:771.29px;font-size:28px;color:#448ef7;font-weight:400;">Detail</div>
<div class="a" style="left:2462px;top:772px;width:2px;height:26px;background:#e8e8e8"></div>
<div class="t" style="left:2479px;top:771.29px;font-size:28px;color:#448ef7;font-weight:400;">Delete</div>
<div class="t" style="left:2375px;top:863.29px;font-size:28px;color:#448ef7;font-weight:400;">Detail</div>
<div class="a" style="left:2462px;top:864px;width:2px;height:26px;background:#e8e8e8"></div>
<div class="t" style="left:2479px;top:863.29px;font-size:28px;color:#448ef7;font-weight:400;">Delete</div>
<div class="t" style="left:2375px;top:955.29px;font-size:28px;color:#448ef7;font-weight:400;">Detail</div>
<div class="a" style="left:2462px;top:956px;width:2px;height:26px;background:#e8e8e8"></div>
<div class="t" style="left:2479px;top:955.29px;font-size:28px;color:#448ef7;font-weight:400;">Delete</div>
</div>
<div class="t" style="left:2220px;top:1697.29px;font-size:28px;color:#595959;font-weight:400;letter-spacing:0.38px">1-25 768 records in total</div>
<svg class="a" style="left:2565px;top:1702px;" width="14" height="20" viewBox="0 0 14 20"><path d="M13 1 L2 10 L13 19" fill="none" stroke="#bfbfbf" stroke-width="2.2"/></svg>
<div class="a" style="left:2596px;top:1686px;width:48px;height:48px;border:2px solid #448ef7;border-radius:6px;background:#fff"></div>
<div class="t" style="left:2611px;top:1697.29px;font-size:28px;color:#448ef7;font-weight:400;">1</div>
<div class="t" style="left:2659.215px;top:1697.29px;font-size:28px;color:#595959;font-weight:400;">2</div>
<div class="t" style="left:2707.215px;top:1697.29px;font-size:28px;color:#595959;font-weight:400;">3</div>
<div class="t" style="left:2754.215px;top:1697.29px;font-size:28px;color:#595959;font-weight:400;">4</div>
<div class="t" style="left:2803.215px;top:1697.29px;font-size:28px;color:#595959;font-weight:400;">5</div>
<div class="t" style="left:2911.43px;top:1697.29px;font-size:28px;color:#595959;font-weight:400;">31</div>
<div class="a" style="left:2849.5px;top:1706.5px;width:7px;height:7px;background:#bfbfbf;border-radius:50%"></div>
<div class="a" style="left:2863.5px;top:1706.5px;width:7px;height:7px;background:#bfbfbf;border-radius:50%"></div>
<div class="a" style="left:2877.5px;top:1706.5px;width:7px;height:7px;background:#bfbfbf;border-radius:50%"></div>
<svg class="a" style="left:2976px;top:1703px;" width="14" height="20" viewBox="0 0 14 20"><path d="M1 1 L12 10 L1 19" fill="none" stroke="#595959" stroke-width="2.2"/></svg>
<div class="a" style="left:3010px;top:1686px;width:190px;height:48px;border:2px solid #d9d9d9;border-radius:6px;background:#fff"></div>
<div class="t" style="left:3026px;top:1697.29px;font-size:28px;color:#595959;font-weight:400;">25 / page</div>
<svg class="a" style="left:3160px;top:1703.4px;" width="20" height="13" viewBox="0 0 20 13"><path d="M0 0 L3.6 0 L10 9.6 L16.4 0 L20 0 L10 12.6 Z" fill="#bfbfbf"/></svg>
</body></html>
